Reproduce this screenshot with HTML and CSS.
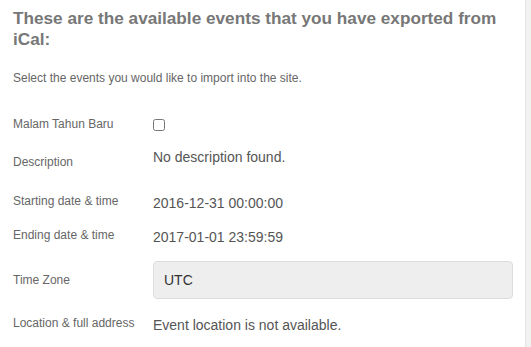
FILE: index.html
```html
<!DOCTYPE html>
<html>
<head>
<meta charset="UTF-8" />
<title>Import iCal events</title>
<link rel="stylesheet" href="styles.css">
</head>
<body>

<div class="panel">
    <h2 class="title">These are the available events that you have exported from iCal:</h2>
    <p class="intro">Select the events you would like to import into the site.</p>

    <div class="event">
        <div class="row row-check">
            <label class="lbl" for="ev1">Malam Tahun Baru</label>
            <div class="val"><input type="checkbox" id="ev1" class="check" /></div>
        </div>
        <div class="row row-desc">
            <div class="lbl">Description</div>
            <div class="val">No description found.</div>
        </div>
        <div class="row row-start">
            <div class="lbl">Starting date &amp; time</div>
            <div class="val">2016-12-31 00:00:00</div>
        </div>
        <div class="row row-end">
            <div class="lbl">Ending date &amp; time</div>
            <div class="val">2017-01-01 23:59:59</div>
        </div>
        <div class="row row-tz">
            <div class="lbl">Time Zone</div>
            <div class="val"><input type="text" class="field" value="UTC" disabled /></div>
        </div>
        <div class="row row-loc">
            <div class="lbl">Location &amp; full address</div>
            <div class="val">Event location is not available.</div>
        </div>
    </div>
</div>

</body>
</html>
```

FILE: styles.css
```css
html, body {
    margin: 0; padding: 0;
    height: 100%;
    font-family: "Liberation Sans", Arial, sans-serif;
    background: #F2F2F2;
}

.panel {
    width: 526px; min-height: 100%;
    box-sizing: border-box;
    background: #FFF;
    border-right: 1px solid #E4E4E4;
    padding: 8px 13px 0 13px;
    overflow: hidden;
}

.title {
    margin: 0; color: #777;
    font-size: 17.2px; line-height: 21px; font-weight: bold;
}
.intro {
    margin: 20px 0 0 0; color: #666;
    font-size: 12px; line-height: 16px;
}

.event { margin-top: 26px; }

.row { display: flex; align-items: flex-start; }
    .lbl {
        width: 140px; flex: none;
        font-size: 12px; line-height: 16px; color: #666;
        padding-top: 8px;
    }
    .val {
        flex: 1;
        font-size: 14px; line-height: 20px; color: #555;
        padding-top: 8px;
    }

.row-check        { height: 34px; }
    .row-check .lbl { padding-top: 4px; }
    .row-check .val { padding-top: 0; }
.row-desc         { height: 39px; }
    .row-desc .val { padding-top: 1px; }
.row-start        { height: 34px; }
.row-end          { height: 42px; }
.row-tz           { height: 46px; }
    .row-tz .lbl  { padding-top: 11px; }
    .row-tz .val  { padding-top: 0; }
.row-loc          { height: 40px; }

.check {
    margin: 7px 0 0 0;
    width: 12px; height: 12px;
}

.field {
    display: block; box-sizing: border-box;
    width: 360px; height: 38px;
    padding: 0 10px; margin: 0;
    background: #EEE; color: #333;
    border: 1px solid #DDD; border-radius: 4px;
    font-family: "Liberation Sans", Arial, sans-serif; font-size: 14px;
}
```
